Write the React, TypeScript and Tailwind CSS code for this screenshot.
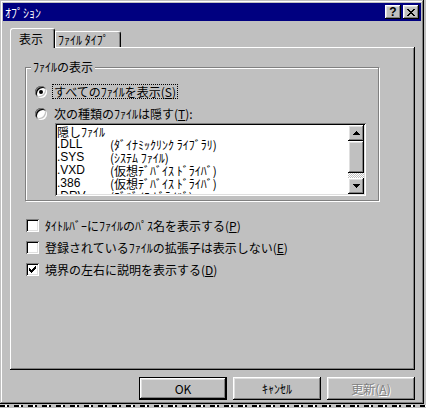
import React from "react";

const raised =
  "shadow-[inset_-1px_-1px_0_#000,inset_1px_1px_0_#fff,inset_-2px_-2px_0_#808080,inset_2px_2px_0_#dfdfdf]";
const sunken =
  "shadow-[inset_1px_1px_0_#808080,inset_-1px_-1px_0_#fff,inset_2px_2px_0_#000,inset_-2px_-2px_0_#dfdfdf]";

function Pixels({ rows, w, h }: { rows: string[]; w: number; h: number }) {
  const rects: React.ReactNode[] = [];
  rows.forEach((r, y) => {
    r.split("").forEach((c, x) => {
      if (c === "X") rects.push(<rect key={`${x}-${y}`} x={x} y={y} width={1} height={1} fill="#000" />);
    });
  });
  return (
    <svg width={w} height={h} viewBox={`0 0 ${w} ${h}`} shapeRendering="crispEdges">
      {rects}
    </svg>
  );
}

const closeX = ["XX....XX", ".XX..XX.", "..XXXX..", "...XX...", "..XXXX..", ".XX..XX.", "XX....XX"];
const upArrow = ["...X...", "..XXX..", ".XXXXX.", "XXXXXXX"];
const downArrow = ["XXXXXXX", ".XXXXX.", "..XXX..", "...X..."];
const check = ["......X", ".....XX", "X...XXX", "XX.XXX.", "XXXXX..", ".XXX...", "..X...."];

function Radio({ on }: { on?: boolean }) {
  return (
    <div
      className={`w-[12px] h-[12px] rounded-full bg-white flex items-center justify-center shrink-0 shadow-[inset_1px_1px_0_#808080,inset_-1px_-1px_0_#fff,inset_2px_2px_0_#000,inset_-2px_-2px_0_#c0c0c0]`}
    >
      {on && <div className="w-[4px] h-[4px] rounded-full bg-black" />}
    </div>
  );
}

function Checkbox({ on }: { on?: boolean }) {
  return (
    <div className={`w-[13px] h-[13px] bg-white shrink-0 flex items-center justify-center ${sunken}`}>
      {on && <Pixels rows={check} w={7} h={7} />}
    </div>
  );
}

const listRows: [string, string][] = [
  [".DLL", "(ﾀﾞｲﾅﾐｯｸﾘﾝｸ ﾗｲﾌﾞﾗﾘ)"],
  [".SYS", "(ｼｽﾃﾑ ﾌｧｲﾙ)"],
  [".VXD", "(仮想ﾃﾞﾊﾞｲｽ ﾄﾞﾗｲﾊﾞ)"],
  [".386", "(仮想ﾃﾞﾊﾞｲｽ ﾄﾞﾗｲﾊﾞ)"],
  [".DRV", "(ﾃﾞﾊﾞｲｽ ﾄﾞﾗｲﾊﾞ)"],
];

export default function App() {
  return (
    <div className="w-[426px] h-[408px] bg-[#c0c0c0] overflow-hidden font-['Noto_Sans_CJK_JP',sans-serif] text-[12px] leading-[13px] text-black">
      <div className="w-[424px] h-[404px] p-[3px] flex flex-col bg-[#c0c0c0] shadow-[inset_-1px_-1px_0_#000,inset_1px_1px_0_#c0c0c0,inset_-2px_-2px_0_#808080,inset_2px_2px_0_#fff]">
        {/* Title bar */}
        <div className="h-[18px] bg-[#000080] flex items-center pl-[2px] pr-[2px]">
          <span className="text-white leading-[13px]">ｵﾌﾟｼｮﾝ</span>
          <div className="ml-auto flex gap-[2px]">
            <div className={`w-[16px] h-[14px] bg-[#c0c0c0] flex items-center justify-center ${raised}`}>
              <span className="font-['Liberation_Sans',sans-serif] font-bold text-[12px] leading-[12px] -mt-px">?</span>
            </div>
            <div className={`w-[16px] h-[14px] bg-[#c0c0c0] flex items-center justify-center ${raised}`}>
              <Pixels rows={closeX} w={8} h={7} />
            </div>
          </div>
        </div>

        {/* Tabs */}
        <div className="mt-[7px] ml-[7px] flex items-end">
          <div className="relative z-10 -mb-px h-[20px] w-[45px] bg-[#c0c0c0] border-l border-t border-r border-l-white border-t-white border-r-black rounded-t-[3px] shadow-[inset_-1px_0_0_#808080] pl-[8px] pt-[3px]">
            表示
          </div>
          <div className="h-[16px] w-[66px] bg-[#c0c0c0] border-l border-t border-r border-l-white border-t-white border-r-black rounded-tr-[3px] shadow-[inset_-1px_0_0_#808080] pl-[2px] pt-[1px]">
            ﾌｧｲﾙ ﾀｲﾌﾟ
          </div>
        </div>

        {/* Panel */}
        <div className="ml-[7px] w-[405px] h-[323px] pl-[15px] pt-[20px] bg-[#c0c0c0] shadow-[inset_-1px_-1px_0_#000,inset_1px_1px_0_#fff,inset_-2px_-2px_0_#808080]">
          {/* Group box */}
          <div className="relative w-[354px] h-[134px] border border-[#808080] shadow-[inset_1px_1px_0_#fff,1px_1px_0_#fff] pt-[16px] pl-[9px]">
            <div className="absolute left-[5px] top-[-8px] px-[2px] bg-[#c0c0c0] leading-[13px]">ﾌｧｲﾙの表示</div>
            <div className="flex items-center h-[15px]">
              <Radio on />
              <span className="ml-[5px] h-[15px] px-[1px] border border-dotted border-black leading-[13px]">
                すべてのﾌｧｲﾙを表示(<span className="underline">S</span>)
              </span>
            </div>
            <div className="flex items-center h-[15px] mt-[7px]">
              <Radio />
              <span className="ml-[5px] h-[15px] px-[1px] border border-transparent leading-[13px]">
                次の種類のﾌｧｲﾙは隠す(<span className="underline">T</span>):
              </span>
            </div>
            {/* Listbox */}
            <div className={`mt-[2px] ml-[20px] w-[311px] h-[73px] p-[2px] bg-white flex ${sunken}`}>
              <div className="flex-1 overflow-hidden bg-white">
                <div className="h-[13px] leading-[13px]">隠しﾌｧｲﾙ</div>
                {listRows.map(([ext, desc]) => (
                  <div key={ext} className="h-[13px] flex leading-[13px]">
                    <span className="w-[53px] font-['Liberation_Sans',sans-serif] text-[12px]">{ext}</span>
                    <span>{desc}</span>
                  </div>
                ))}
              </div>
              <div className="w-[16px] flex flex-col bg-[#c0c0c0]">
                <div className={`h-[16px] flex items-center justify-center bg-[#c0c0c0] ${raised}`}>
                  <Pixels rows={upArrow} w={7} h={4} />
                </div>
                <div className={`h-[32px] bg-[#c0c0c0] ${raised}`} />
                <div className="flex-1 bg-[conic-gradient(#fff_25%,#c0c0c0_0_50%,#fff_0_75%,#c0c0c0_0)] bg-[length:2px_2px]" />
                <div className={`h-[16px] flex items-center justify-center bg-[#c0c0c0] ${raised}`}>
                  <Pixels rows={downArrow} w={7} h={4} />
                </div>
              </div>
            </div>
          </div>

          {/* Checkboxes */}
          <div className="mt-[18px] ml-[1px] flex flex-col gap-[9px]">
            <div className="flex items-center h-[13px] gap-[6px]">
              <Checkbox />
              <span>
                ﾀｲﾄﾙﾊﾞｰにﾌｧｲﾙのﾊﾟｽ名を表示する(<span className="underline">P</span>)
              </span>
            </div>
            <div className="flex items-center h-[13px] gap-[6px]">
              <Checkbox />
              <span>
                登録されているﾌｧｲﾙの拡張子は表示しない(<span className="underline">E</span>)
              </span>
            </div>
            <div className="flex items-center h-[13px] gap-[6px]">
              <Checkbox on />
              <span>
                境界の左右に説明を表示する(<span className="underline">D</span>)
              </span>
            </div>
          </div>
        </div>

        {/* Buttons */}
        <div className="mt-[7px] flex justify-end gap-[6px] pr-[6px]">
          <div className="w-[88px] h-[23px] border border-black">
            <div className={`w-full h-full flex items-center justify-center bg-[#c0c0c0] ${raised}`}>OK</div>
          </div>
          <div className={`w-[88px] h-[23px] flex items-center justify-center bg-[#c0c0c0] ${raised}`}>ｷｬﾝｾﾙ</div>
          <div className={`w-[88px] h-[23px] flex items-center justify-center bg-[#c0c0c0] ${raised}`}>
            <span className="text-[#808080] [text-shadow:1px_1px_0_#fff]">
              更新(<span className="underline">A</span>)
            </span>
          </div>
        </div>
      </div>
      <div className="h-[2px] mt-px w-[426px] bg-[repeating-linear-gradient(90deg,#000_0_5px,#fff_5px_7px,#000_7px_9px,#c0c0c0_9px_14px)]" />
    </div>
  );
}
